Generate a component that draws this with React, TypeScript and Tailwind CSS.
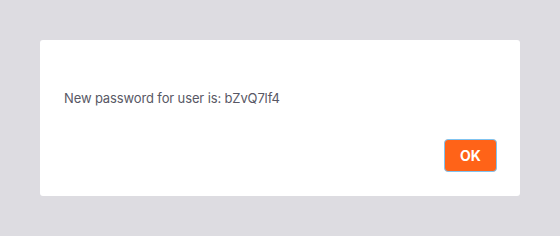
export default function App() {
  return (
    <div
      className="flex h-[236px] w-[560px] items-start justify-center bg-[#dddce1] pt-10"
      style={{ fontFamily: 'Inter, "Noto Sans", sans-serif' }}
    >
      <div className="flex h-[156px] w-[480px] flex-col rounded-[3px] bg-white px-6">
        <p className="mt-[48px] text-[13px] leading-5 tracking-[-0.01em] text-[#585865]">
          New password for user is: bZvQ7lf4
        </p>
        <div className="mt-[31px] flex justify-end">
          <button
            type="button"
            className="mr-[-1px] h-[33px] w-[53px] rounded-[4px] border border-[#7fc3f0] bg-[#ff6318] text-[14px] font-bold text-white"
          >
            OK
          </button>
        </div>
      </div>
    </div>
  );
}
